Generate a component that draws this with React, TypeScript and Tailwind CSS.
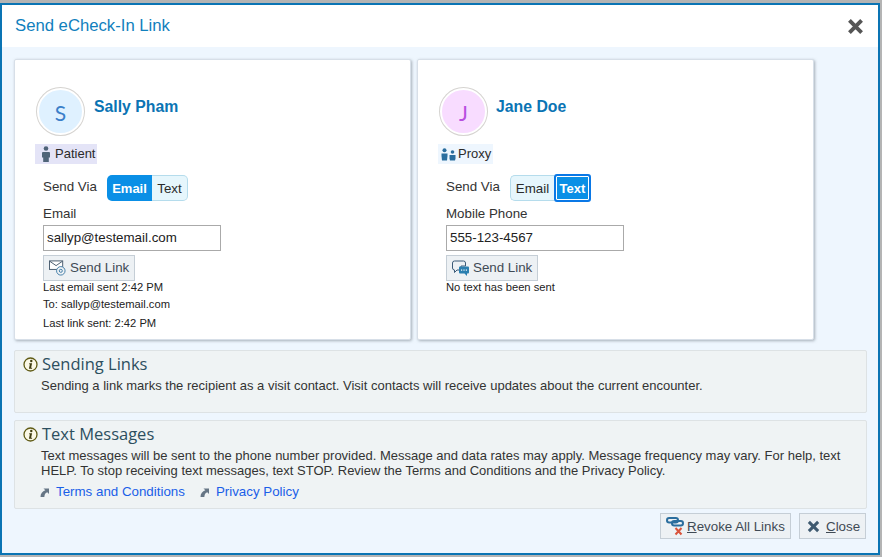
import React from "react";

const UserIcon = () => (
  <svg width="10" height="16" viewBox="0 0 10 16" className="shrink-0">
    <circle cx="5" cy="2.5" r="2.3" fill="#4f6478" />
    <path d="M1.5 6h7l.5 1v4.500H7.800V16H2.200v-4.500H1V7z" fill="#4f6478" />
  </svg>
);

const ProxyIcon = () => (
  <svg width="15" height="13" viewBox="0 0 15 13" className="shrink-0">
    <circle cx="3.500" cy="2.200" r="2" fill="#2b6e9e" />
    <path d="M0.500 5.500h6v2.500l-.5 4.500H1L.5 8z" fill="#2b6e9e" />
    <circle cx="11.500" cy="4" r="1.800" fill="#2b6e9e" />
    <path d="M8.500 7h6v3.500l-.5 2H9l-.5-2z" fill="#2b6e9e" />
  </svg>
);

const MailIcon = () => (
  <svg width="17" height="16" viewBox="0 0 18 16" className="shrink-0">
    <rect x="0.500" y="0.500" width="14" height="9" fill="#fff" stroke="#44586b" />
    <path d="M1 1l6.500 4.500L14 1" fill="none" stroke="#44586b" />
    <circle cx="12.500" cy="11" r="4.500" fill="#edf1f4" stroke="#3f7ba6" />
    <circle cx="12.500" cy="11" r="1.600" fill="none" stroke="#3f7ba6" />
  </svg>
);

const ChatIcon = () => (
  <svg width="17" height="17" viewBox="0 0 17 17" className="shrink-0">
    <path d="M2.500 1h9a2 2 0 0 1 2 2v3H9v4H5l-2.500 2.500V10A2 2 0 0 1 .500 8V3a2 2 0 0 1 2-2z" fill="none" stroke="#3b5b78" />
    <path d="M8 6.500h8a1 1 0 0 1 1 1v5a1 1 0 0 1-1 1h-1v2.500L12.500 13.500H8a1 1 0 0 1-1-1v-5a1 1 0 0 1 1-1z" fill="#2b7fb0" />
    <rect x="9" y="9.500" width="1.200" height="1.200" fill="#fff" />
    <rect x="11.400" y="9.500" width="1.200" height="1.200" fill="#fff" />
    <rect x="13.800" y="9.500" width="1.200" height="1.200" fill="#fff" />
  </svg>
);

const InfoIcon = () => (
  <svg width="15" height="15" viewBox="0 0 15 15" className="shrink-0">
    <circle cx="7.500" cy="7.500" r="6.500" fill="#fbf8e6" stroke="#5f5a14" strokeWidth="1.300" />
    <circle cx="8.300" cy="4" r="1.200" fill="#3f3c10" />
    <path d="M6.300 6.300h2.800l-1 4.500h1v.9H5.900l1-4.500h-.8z" fill="#3f3c10" />
  </svg>
);

const LinkArrow = () => (
  <svg width="9" height="9" viewBox="0 0 9 9" className="shrink-0">
    <path d="M3.500 0.500H9V6L7.300 4.300C6 4.500 4.500 6 4.300 9H0.500C.5 5.500 2.500 3.200 5.300 2.300z" fill="#667685" />
  </svg>
);

const RevokeIcon = () => (
  <svg width="20" height="19" viewBox="0 0 20 19" className="shrink-0">
    <rect x="1" y="1" width="11" height="4.500" rx="2.200" fill="none" stroke="#2b6e9e" strokeWidth="2" />
    <rect x="6" y="4" width="11" height="4.500" rx="2.200" fill="none" stroke="#2b6e9e" strokeWidth="2" />
    <path d="M9.500 11l6 6.500M15.500 11l-6 6.500" stroke="#d9533b" strokeWidth="2" />
  </svg>
);

const XIcon = ({ size, color }: { size: number; color: string }) => (
  <svg width={size} height={size} viewBox="0 0 14 14" className="shrink-0">
    <path d="M2 2l10 10M12 2L2 12" stroke={color} strokeWidth="3.200" />
  </svg>
);

function Toggle({ active }: { active: "Email" | "Text" }) {
  return (
    <div className="flex h-[26px] w-[81px] text-[13.330px] leading-[24px]">
      {active === "Email" ? (
        <>
          <div className="flex w-[45px] items-center justify-center rounded-l-[5px] bg-[#0a8fe6] pt-[1px] text-[13px] font-bold text-white">Email</div>
          <div className="flex w-[36px] items-center justify-center rounded-r-[5px] border border-l-0 border-[#b5dcec] bg-[#e6f6fc] pt-[1px] text-[#2b2b2b]">Text</div>
        </>
      ) : (
        <>
          <div className="flex w-[45px] items-center justify-center rounded-l-[5px] border border-r-0 border-[#b5dcec] bg-[#e6f6fc] pt-[1px] text-[#2b2b2b]">Email</div>
          <div className="-my-[1px] flex w-[38px] items-center justify-center rounded-[3px] border-2 border-[#0a78e6] bg-[#0a8fe6] pt-[1px] text-[13px] font-bold text-white outline-1 -outline-offset-3 outline-white">Text</div>
        </>
      )}
    </div>
  );
}

function Card({
  initial,
  name,
  nameGap,
  circleBg,
  initialColor,
  role,
  roleIcon,
  roleBg,
  active,
  label,
  value,
  sendIcon,
  children,
}: {
  initial: string;
  name: string;
  nameGap: string;
  circleBg: string;
  initialColor: string;
  role: string;
  roleIcon: React.ReactNode;
  roleBg: string;
  active: "Email" | "Text";
  label: string;
  value: string;
  sendIcon: React.ReactNode;
  children: React.ReactNode;
}) {
  return (
    <div className="h-[281px] w-[397px] rounded-[2px] border border-[#d7dfe8] bg-white pl-[20px] pt-[28px] shadow-[1px_1px_3px_rgba(120,130,140,0.6)]">
      <div className="flex items-start">
        <div
          className={`ml-[2px] flex h-[47px] w-[47px] items-center justify-center rounded-full border-2 border-white text-[21px] leading-none shadow-[0_0_0_1px_#d5d3d0] ${circleBg} ${initialColor}`}
          style={{ fontFamily: "Lato, sans-serif" }}
        >
          <span className="mt-[2px]">{initial}</span>
        </div>
        <div className={`mt-[9px] text-[15.800px] font-bold leading-[20px] text-[#0a74b4] ${nameGap}`}>{name}</div>
      </div>
      <div className={`mt-[9px] flex h-[20px] w-fit items-center gap-[4px] pr-[2px] text-[13px] text-[#2b2b2b] ${roleBg}`}>
        {roleIcon}
        <span>{role}</span>
      </div>
      <div className="ml-[8px] mt-[11px] flex items-start">
        <div className="mt-[4px] w-[64px] text-[13.330px] leading-[16px] text-[#333]">Send Via</div>
        <Toggle active={active} />
      </div>
      <div className="ml-[8px] mt-[5px] text-[13.330px] leading-[16px] text-[#333]">{label}</div>
      <div className="ml-[8px] mt-[3px] flex h-[26px] w-[178px] items-center border border-[#aaa] bg-white pl-[3px] text-[13.330px] text-[#222]">{value}</div>
      <div className="ml-[8px] mt-[4px] flex h-[26px] w-[92px] items-center gap-[4px] border border-[#c5ced6] bg-[#edf1f4] pl-[5px] text-[13.330px] text-[#3f4a55]">
        {sendIcon}
        <span>Send Link</span>
      </div>
      <div className="-mt-[1px] ml-[8px] text-[11.200px] text-[#222]">{children}</div>
    </div>
  );
}

export default function App() {
  return (
    <div
      className="h-[557px] w-[882px] overflow-hidden bg-[#b4b4b4] pt-[3px]"
      style={{ fontFamily: '"Liberation Sans", Arial, sans-serif' }}
    >
      <div className="flex h-[552px] w-[880px] flex-col border-2 border-[#0a74b4] bg-[#eef6fe]">
        <div className="flex h-[42px] shrink-0 items-center justify-between bg-white pl-[13px] pr-[14px]">
          <span className="text-[16.700px] text-[#1180bd]">Send eCheck-In Link</span>
          <XIcon size={17} color="#555555" />
        </div>
        <div className="flex flex-col pl-[12px] pr-[11px] pt-[12px]">
          <div className="flex gap-[6px]">
            <Card
              initial="S"
              name="Sally Pham"
              nameGap="ml-[10px]"
              circleBg="bg-[#dff1ff]"
              initialColor="text-[#3a7fc9]"
              role="Patient"
              roleIcon={<span className="ml-[6px]"><UserIcon /></span>}
              roleBg="bg-[#e4e4f7]"
              active="Email"
              label="Email"
              value="sallyp@testemail.com"
              sendIcon={<MailIcon />}
            >
              <div className="leading-[14px]">Last email sent 2:42 PM</div>
              <div className="mt-[3px] leading-[14px]">To: sallyp@testemail.com</div>
              <div className="mt-[5px] leading-[14px]">Last link sent: 2:42 PM</div>
            </Card>
            <Card
              initial="J"
              name="Jane Doe"
              nameGap="ml-[9px]"
              circleBg="bg-[#f8dcff]"
              initialColor="text-[#b84fe0]"
              role="Proxy"
              roleIcon={<span className="ml-[3px] -mr-[2px]"><ProxyIcon /></span>}
              roleBg="bg-[#eef6fe]"
              active="Text"
              label="Mobile Phone"
              value="555-123-4567"
              sendIcon={<ChatIcon />}
            >
              <div className="leading-[14px]">No text has been sent</div>
            </Card>
          </div>
          <div className="mt-[10px] h-[63px] rounded-[2px] border border-[#dde2e4] bg-[#eff3f4] pl-[8px] pt-[3px]">
            <div className="flex items-center gap-[4px]">
              <InfoIcon />
              <span className="text-[16.500px] leading-[20px] text-[#2d4f5f]" style={{ fontFamily: '"Open Sans", sans-serif' }}>Sending Links</span>
            </div>
            <p className="ml-[18px] mt-[4px] text-[13px] leading-[15px] text-[#333]">
              Sending a link marks the recipient as a visit contact. Visit contacts will receive updates about the current encounter.
            </p>
          </div>
          <div className="mt-[7px] h-[89px] rounded-[2px] border border-[#dde2e4] bg-[#eff3f4] pl-[8px] pr-[18px] pt-[3px]">
            <div className="flex items-center gap-[4px]">
              <InfoIcon />
              <span className="text-[16.500px] leading-[20px] text-[#2d4f5f]" style={{ fontFamily: '"Open Sans", sans-serif' }}>Text Messages</span>
            </div>
            <p className="ml-[18px] mt-[4px] text-[13px] leading-[15px] text-[#333]">
              Text messages will be sent to the phone number provided. Message and data rates may apply. Message frequency may vary. For help, text HELP. To stop receiving text messages, text STOP. Review the Terms and Conditions and the Privacy Policy.
            </p>
            <div className="ml-[17px] mt-[6px] flex items-center text-[13.330px] leading-[16px] text-[#1a5fe8]">
              <LinkArrow />
              <span className="ml-[7px]">Terms and Conditions</span>
              <span className="ml-[15px]"><LinkArrow /></span>
              <span className="ml-[7px]">Privacy Policy</span>
            </div>
          </div>
          <div className="mr-[1px] mt-[4px] flex justify-end gap-[8px]">
            <div className="flex h-[26px] w-[131px] items-center gap-[1px] border border-[#c5ced6] bg-[#edf1f4] pl-[5px] pt-[1px] text-[13.330px] text-[#3f4a55]">
              <RevokeIcon />
              <span><span className="underline">R</span>evoke All Links</span>
            </div>
            <div className="flex h-[26px] w-[67px] items-center gap-[6px] border border-[#c5ced6] bg-[#edf1f4] pl-[7px] pt-[1px] text-[13.330px] text-[#3f4a55]">
              <XIcon size={13} color="#3f5a70" />
              <span><span className="underline">C</span>lose</span>
            </div>
          </div>
        </div>
      </div>
    </div>
  );
}
